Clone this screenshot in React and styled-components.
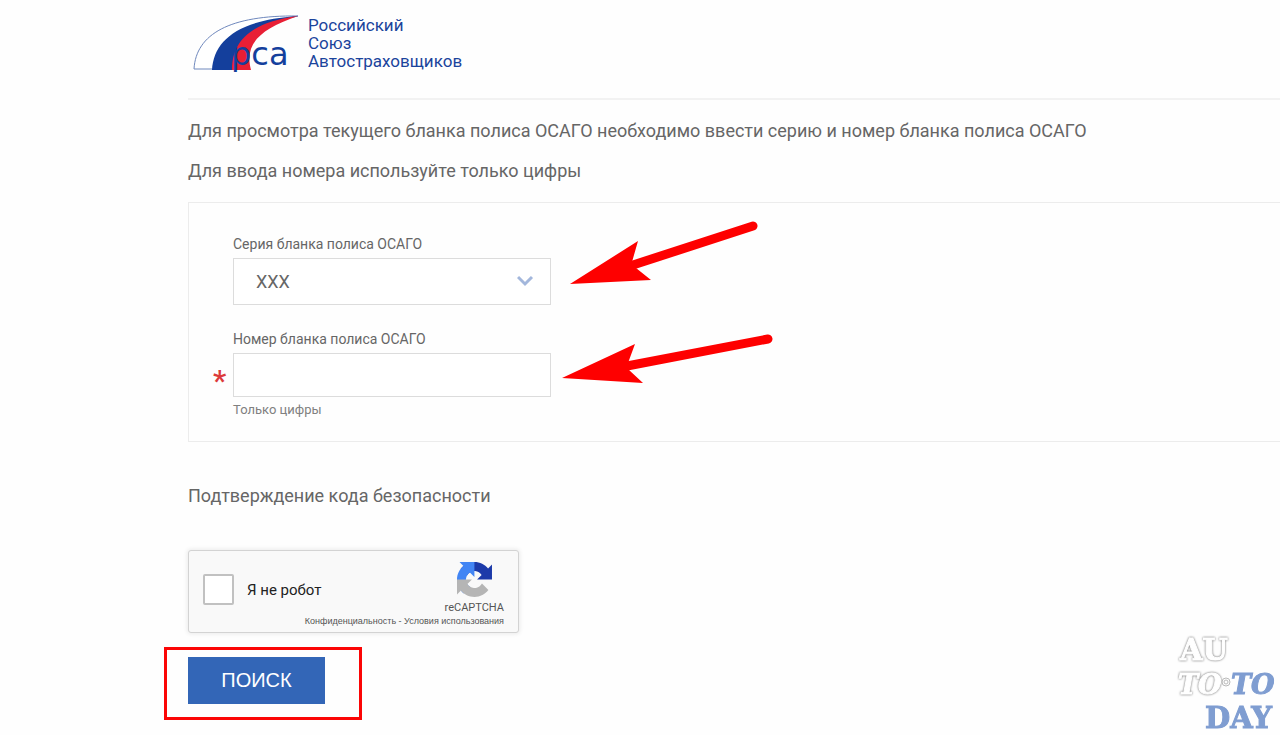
import React, { useState } from 'react';
import styled, { createGlobalStyle } from 'styled-components';

const GlobalStyle = createGlobalStyle`
  * {
    box-sizing: border-box;
  }

  body {
    margin: 0;
    background: #fefefe;
    color: #666;
    font-family: Roboto, 'Liberation Sans', sans-serif;
    font-size: 18px;
    line-height: 24px;
  }
`;

const Page = styled.main`
  padding: 12px 0 30px 188px;
  overflow: hidden;
`;

const Header = styled.header`
  border-bottom: 2px solid #f2f2f2;
  padding-bottom: 26px;
`;

const LogoLink = styled.a`
  display: inline-flex;
  gap: 8px;
  padding-left: 4px;
  color: #1b449c;
  text-decoration: none;
  vertical-align: top;
`;

const LogoName = styled.span`
  padding-top: 4px;
  font-size: 17px;
  line-height: 18px;
`;

const Line = styled.span`
  display: block;
`;

const Intro = styled.p`
  margin: ${({ $first }) => ($first ? '19px' : '16px')} 0 0;
`;

const Panel = styled.section`
  display: grid;
  gap: 24px;
  margin-top: 19px;
  padding: 31px 24px 21px;
  border: 1px solid #ececec;
  border-right: 0;
`;

const Field = styled.div`
  display: grid;
  grid-template-columns: 20px minmax(200px, 318px);
  align-items: center;
`;

const Label = styled.label`
  grid-column: 2;
  padding-bottom: 4px;
  font-size: 14px;
  line-height: 20px;
`;

const Required = styled.span`
  grid-column: 1;
  height: 28px;
  color: #dc3a3a;
  font-size: 30px;
  font-weight: 500;
  line-height: 40px;
`;

const Control = styled.div`
  grid-column: 2;
  position: relative;
`;

const Select = styled.select`
  display: block;
  width: 100%;
  height: 47px;
  padding: 0 22px;
  border: 1px solid #dcdcdc;
  border-radius: 0;
  background: #fff;
  color: #666;
  font: inherit;
  appearance: none;
`;

const Chevron = styled.svg`
  position: absolute;
  top: 17px;
  right: 17px;
  pointer-events: none;
`;

const Input = styled.input`
  display: block;
  width: 100%;
  height: 44px;
  padding: 0 22px;
  border: 1px solid #dcdcdc;
  background: #fff;
  color: #666;
  font: inherit;
`;

const Hint = styled.small`
  grid-column: 2;
  padding-top: 3px;
  color: #808080;
  font-size: 13px;
  line-height: 20px;
`;

const Pointer = styled.svg`
  position: absolute;
  left: 100%;
  bottom: ${({ $bottom }) => $bottom}px;
  pointer-events: none;
`;

const Heading = styled.h2`
  margin: 42px 0;
  font-size: 18px;
  font-weight: 400;
  line-height: 24px;
`;

const Captcha = styled.div`
  display: flex;
  justify-content: space-between;
  align-items: center;
  width: 331px;
  height: 83px;
  padding: 0 14px;
  border: 1px solid #d3d3d3;
  border-radius: 3px;
  background: #f9f9f9;
  box-shadow: 0 0 4px 1px rgba(0, 0, 0, 0.08);
  color: #222;
`;

const RobotLabel = styled.label`
  display: flex;
  flex: none;
  align-items: center;
  gap: 13px;
  padding-bottom: 4px;
  font-size: 15px;
  line-height: 20px;
`;

const RobotBox = styled.input`
  width: 31px;
  height: 31px;
  margin: 0;
  border: 2px solid #c1c1c1;
  border-radius: 2px;
  background: #fff;
  appearance: none;

  &:checked {
    background: #4285f4;
  }
`;

const Brand = styled.div`
  display: flex;
  flex: 1;
  flex-direction: column;
  align-items: flex-end;
  width: 0;
  padding-top: 6px;
  color: #555;
  font-size: 11px;
  line-height: 14px;
  white-space: nowrap;
`;

const BrandMark = styled.svg`
  margin: 0 12px 4px 0;
`;

const Legal = styled.div`
  font-family: 'Liberation Sans', sans-serif;
  font-size: 9px;
  line-height: 12px;

  a {
    color: inherit;
    text-decoration: none;
  }
`;

const Submit = styled.div`
  position: relative;
  width: fit-content;
  margin-top: 24px;

  &::after {
    content: '';
    position: absolute;
    inset: -10px -37px -16px -24px;
    border: 3px solid #fb0505;
    pointer-events: none;
  }
`;

const SearchButton = styled.button`
  display: block;
  min-width: 137px;
  height: 47px;
  padding: 0 32px 2px;
  border: 0;
  background: #3366b7;
  color: #fff;
  font-family: 'Liberation Sans', sans-serif;
  font-size: 20px;
  line-height: 24px;
  cursor: pointer;
`;

const Watermark = styled.svg`
  position: fixed;
  right: 0;
  bottom: 0;
  font-family: 'DejaVu Serif', serif;
  font-weight: 700;
  pointer-events: none;
`;

const Outlined = styled.g`
  fill: #fff;
  stroke: #fff;
  stroke-width: 1px;
  filter: drop-shadow(0 0 1px #666);
`;

const LogoMark = () => (
  <svg width="108" height="60" viewBox="0 0 108 60" aria-hidden="true">
    <path d="M2 57C4 22 38 3 106 4C55 14 39 30 38 57Z" fill="#fff" stroke="#6f88bd" />
    <path d="M20 58C22 28 46 8 106 4C62 14 44 30 42 58Z" fill="#143f9c" />
    <path d="M40 58C40 30 58 10 106 4C68 17 52 32 59 58Z" fill="#e81f35" />
    <text x="39" y="53" fontFamily="DejaVu Sans" fontSize="32" fill="#143f9c">
      рса
    </text>
  </svg>
);

const RecaptchaMark = () => (
  <BrandMark width="35" height="35" viewBox="0 0 64 64" aria-hidden="true">
    <path
      fill="#1c3aa9"
      d="M64 31.955l-.033-1.37V4.687l-7.16 7.16C50.948 4.674 42.033.093 32.05.093c-10.4 0-19.622 4.96-25.458 12.64l11.736 11.86a15.55 15.55 0 0 1 4.754-5.334c2.05-1.6 4.952-2.906 8.968-2.906.485 0 .86.057 1.135.163 4.976.393 9.288 3.14 11.828 7.124l-8.307 8.307L64 31.953"
    />
    <path
      fill="#4285f4"
      d="M31.862.094l-1.37.033H4.594l7.16 7.16C4.58 13.147 0 22.06 0 32.046c0 10.4 4.96 19.622 12.64 25.458L24.5 45.768a15.55 15.55 0 0 1-5.334-4.754c-1.6-2.05-2.906-4.952-2.906-8.968 0-.485.057-.86.163-1.135.393-4.976 3.14-9.288 7.124-11.828l8.307 8.307L31.86.095"
    />
    <path
      fill="#b5b5b5"
      d="M.001 32.045l.033 1.37v25.898l7.16-7.16c5.86 7.173 14.774 11.754 24.76 11.754 10.4 0 19.622-4.96 25.458-12.64l-11.736-11.86a15.55 15.55 0 0 1-4.754 5.334c-2.05 1.6-4.952 2.906-8.968 2.906-.485 0-.86-.057-1.135-.163-4.976-.393-9.288-3.14-11.828-7.124l8.307-8.307c-10.522.04-22.4.066-27.295-.005"
    />
  </BrandMark>
);

const App = () => {
  const [series, setSeries] = useState('XXX');
  const [number, setNumber] = useState('');

  return (
    <>
      <GlobalStyle />
      <Page>
        <Header>
          <LogoLink href="#">
            <LogoMark />
            <LogoName>
              <Line>Российский</Line>
              <Line>Союз</Line>
              <Line>Автостраховщиков</Line>
            </LogoName>
          </LogoLink>
        </Header>

        <Intro $first>
          Для просмотра текущего бланка полиса ОСАГО необходимо ввести серию и номер бланка полиса ОСАГО
        </Intro>
        <Intro>Для ввода номера используйте только цифры</Intro>

        <form onSubmit={e => e.preventDefault()}>
          <Panel>
            <Field>
              <Label htmlFor="series">Серия бланка полиса ОСАГО</Label>
              <Control>
                <Select id="series" value={series} onChange={e => setSeries(e.target.value)}>
                  <option>XXX</option>
                </Select>
                <Chevron width="17" height="12" viewBox="0 0 17 12" aria-hidden="true">
                  <path d="M1 2L8 9L15 2" fill="none" stroke="#a3b7dc" strokeWidth="3" />
                </Chevron>
                <Pointer $bottom={17} width="230" height="80" viewBox="0 0 230 80" aria-hidden="true">
                  <path d="M19 76L87 33L81 54L85 60L100 72Z" fill="#fe0000" />
                  <path d="M82 57L202 18" stroke="#fe0000" strokeWidth="9" strokeLinecap="round" />
                </Pointer>
              </Control>
            </Field>
            <Field>
              <Label htmlFor="number">Номер бланка полиса ОСАГО</Label>
              <Required>*</Required>
              <Control>
                <Input
                  id="number"
                  inputMode="numeric"
                  required
                  value={number}
                  onChange={e => setNumber(e.target.value.replace(/\D/g, ''))}
                />
                <Pointer $bottom={9} width="230" height="60" viewBox="0 0 230 60" aria-hidden="true">
                  <path d="M11 50L84 16L77 35L78 42L92 55Z" fill="#fe0000" />
                  <path d="M76 38L217 11" stroke="#fe0000" strokeWidth="9" strokeLinecap="round" />
                </Pointer>
              </Control>
              <Hint>Только цифры</Hint>
            </Field>
          </Panel>

          <Heading>Подтверждение кода безопасности</Heading>

          <Captcha>
            <RobotLabel>
              <RobotBox type="checkbox" />
              Я не робот
            </RobotLabel>
            <Brand>
              <RecaptchaMark />
              reCAPTCHA
              <Legal>
                <a href="#">Конфиденциальность</a> - <a href="#">Условия использования</a>
              </Legal>
            </Brand>
          </Captcha>

          <Submit>
            <SearchButton type="submit">ПОИСК</SearchButton>
          </Submit>
        </form>
      </Page>

      <Watermark width="108" height="108" viewBox="0 0 108 108" role="img" aria-label="AUTO TODAY">
        <Outlined fontSize="29">
          <text x="8" y="33">AU</text>
          <text x="6" y="67" fontStyle="italic" fontSize="27">TO</text>
        </Outlined>
        <circle cx="54" cy="55" r="4" fill="none" stroke="#b9b9b9" />
        <circle cx="54" cy="55" r="2" fill="none" stroke="#b9b9b9" />
        <g fill="#7f9dd1" stroke="#7f9dd1" fontSize="29">
          <text x="59" y="67" fontStyle="italic" fontSize="27">TO</text>
          <text x="33" y="101">DAY</text>
        </g>
      </Watermark>
    </>
  );
};

export default App;
